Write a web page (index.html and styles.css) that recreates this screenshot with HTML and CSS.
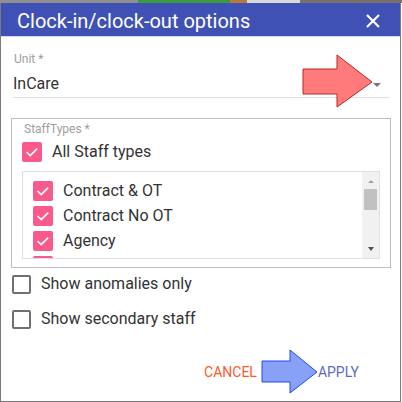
FILE: index.html
```html
<!DOCTYPE html>
<html lang="en">
<head>
  <meta charset="UTF-8">
  <title>Clock-in/clock-out options</title>
  <link rel="stylesheet" href="styles.css">
</head>
<body>
  <!-- page behind the dialog, only a sliver shows -->
  <div class="backdrop-strip">
    <span class="strip-gray"></span>
    <span class="strip-green"></span>
    <span class="strip-brown"></span>
    <span class="strip-light"></span>
    <span class="strip-dark"></span>
  </div>

  <div class="dialog">
    <div class="dialog-header">
      <h2>Clock-in/clock-out options</h2>
      <button class="close-button" aria-label="Close">
        <svg width="14" height="14" viewBox="0 0 14 14">
          <path d="M1 1 L13 13 M13 1 L1 13" stroke="#fff" stroke-width="2.2" fill="none"/>
        </svg>
      </button>
    </div>

    <div class="dialog-body">
      <!-- Unit -->
      <div class="field">
        <div class="field-label">Unit *</div>
        <div class="select-box">
          <span>InCare</span>
          <span class="caret"></span>
        </div>
      </div>

      <!-- Staff types -->
      <div class="staff-types">
        <div class="group-label">StaffTypes *</div>
        <label class="check-row">
          <span class="box checked">
            <svg width="20" height="20" viewBox="0 0 20 20"><path d="M4.5 10 L8.2 13.6 L15.2 6.6" stroke="#fff" stroke-width="1.7" fill="none"/></svg>
          </span>
          All Staff types
        </label>

        <div class="type-list">
          <div class="type-items">
            <label class="check-row">
              <span class="box checked"><svg width="20" height="20" viewBox="0 0 20 20"><path d="M4.5 10 L8.2 13.6 L15.2 6.6" stroke="#fff" stroke-width="1.7" fill="none"/></svg></span>
              Contract &amp; OT
            </label>
            <label class="check-row">
              <span class="box checked"><svg width="20" height="20" viewBox="0 0 20 20"><path d="M4.5 10 L8.2 13.6 L15.2 6.6" stroke="#fff" stroke-width="1.7" fill="none"/></svg></span>
              Contract No OT
            </label>
            <label class="check-row">
              <span class="box checked"><svg width="20" height="20" viewBox="0 0 20 20"><path d="M4.5 10 L8.2 13.6 L15.2 6.6" stroke="#fff" stroke-width="1.7" fill="none"/></svg></span>
              Agency
            </label>
            <!-- next item is scrolled out of view -->
            <div class="check-row">
              <span class="box checked"></span>
            </div>
          </div>
          <div class="scrollbar">
            <span class="arrow-up"></span>
            <span class="thumb"></span>
            <span class="arrow-down"></span>
          </div>
        </div>
      </div>

      <!-- Options -->
      <label class="check-row option">
        <span class="box"></span>
        Show anomalies only
      </label>
      <label class="check-row option second">
        <span class="box"></span>
        Show secondary staff
      </label>

      <div class="actions">
        <button class="btn-cancel">CANCEL</button>
        <button class="btn-apply">APPLY</button>
      </div>
    </div>
  </div>

  <!-- annotation arrows drawn over the screenshot -->
  <svg class="annotations" width="402" height="402" viewBox="0 0 402 402">
    <polygon points="303,69 337,69 337,55 372,82 337,107 337,94 303,94" fill="#ff7a7a" stroke="#b42828" stroke-width="1"/>
    <polygon points="262,361 290,361 290,350 317,372 290,393 290,382 262,382" fill="#86a1f6" stroke="#2448f2" stroke-width="1"/>
  </svg>
</body>
</html>
```

FILE: styles.css
```css
:root {
  --indigo: #3f51b5;
  --pink: #f95a8c;
  --text: #333333;
  --muted: #9e9e9e;
  --line: #e0e0e0;
}

body {
  margin: 0;
  font-family: Roboto, 'Liberation Sans', Arial, sans-serif;
  color: var(--text);
  background: #ffffff;
  position: relative;
  width: 402px;
  height: 402px;
  overflow: hidden;
}

/* Sliver of the page behind */
.backdrop-strip {
  display: flex;
  height: 3px;
}

.strip-gray { width: 138px; background: #8f8f8f; }
.strip-green { width: 92px; background: #3d9b3f; }
.strip-brown { width: 17px; background: #b7773e; }
.strip-light { width: 53px; background: #d9d9d9; }
.strip-dark { flex: 1; background: #77716a; }

/* Dialog */
.dialog {
  width: 401px;
  height: 399px;
  box-sizing: border-box;
  border: 1px solid #7a7a7a;
  border-top: none;
  background: #ffffff;
}

.dialog-header {
  display: flex;
  justify-content: space-between;
  align-items: flex-start;
  height: 34px;
  box-sizing: border-box;
  background: var(--indigo);
  border-bottom: 1px solid #d4d8ef;
  padding: 4px 20px 0 16px;
}

.dialog-header h2 {
  margin: 0;
  font-size: 20px;
  font-weight: 400;
  line-height: 29px;
  color: #ffffff;
}

.close-button {
  background: none;
  border: none;
  padding: 0;
  margin-top: 7px;
  width: 14px;
  height: 14px;
  display: flex;
}

.dialog-body {
  padding: 15px 9px 0 10px;
}

/* Unit field */
.field {
  margin: 0 1px 0 2px;
}

.field-label {
  font-size: 12px;
  line-height: 14px;
  color: var(--muted);
  padding-left: 1px;
}

.select-box {
  display: flex;
  justify-content: space-between;
  align-items: center;
  margin-top: 8px;
  padding-bottom: 3px;
  border-bottom: 1px solid var(--line);
  font-size: 16px;
  line-height: 20px;
}

.caret {
  width: 0;
  height: 0;
  border-left: 4px solid transparent;
  border-right: 4px solid transparent;
  border-top: 4px solid #777777;
  margin: 2px 9px 0 0;
}

/* Staff types group */
.staff-types {
  margin-top: 20px;
  border: 1px solid #bdbdbd;
  padding: 3px 10px 8px 10px;
}

.group-label {
  font-size: 12px;
  line-height: 14px;
  color: var(--muted);
  padding-left: 2px;
}

.check-row {
  display: flex;
  align-items: center;
  gap: 10px;
  height: 20px;
  font-size: 16px;
  line-height: 20px;
  color: var(--text);
}

.staff-types > .check-row {
  margin-top: 6px;
}

.box {
  width: 19px;
  height: 19px;
  box-sizing: border-box;
  border: 2px solid #707070;
  border-radius: 2px;
  flex-shrink: 0;
}

.box.checked {
  width: 20px;
  height: 20px;
  border: none;
  background: var(--pink);
  display: flex;
}

.type-list {
  display: flex;
  margin-top: 9px;
  height: 88px;
  box-sizing: border-box;
  border: 1px solid var(--line);
}

.type-items {
  flex: 1;
  overflow: hidden;
  padding: 9px 0 0 10px;
  display: flex;
  flex-direction: column;
  gap: 5px;
}

.type-items .check-row {
  flex-shrink: 0;
}

/* Fake scrollbar */
.scrollbar {
  width: 17px;
  background: #f1f1f1;
  display: flex;
  flex-direction: column;
  align-items: center;
}

.arrow-up {
  width: 0;
  height: 0;
  margin-top: 8px;
  border-left: 3px solid transparent;
  border-right: 3px solid transparent;
  border-bottom: 3px solid #a3a3a3;
}

.thumb {
  width: 13px;
  height: 21px;
  margin-top: 6px;
  background: #c1c1c1;
}

.arrow-down {
  width: 0;
  height: 0;
  margin-top: auto;
  margin-bottom: 7px;
  border-left: 3.5px solid transparent;
  border-right: 3.5px solid transparent;
  border-top: 4px solid #505050;
}

/* Options */
.option {
  margin-top: 6px;
  padding-left: 1px;
}

.option.second {
  margin-top: 15px;
}

/* Actions */
.actions {
  display: flex;
  justify-content: flex-end;
  gap: 61px;
  margin-top: 33px;
  padding-right: 32px;
}

.actions button {
  background: none;
  border: none;
  padding: 0;
  font-family: inherit;
  font-size: 14px;
  line-height: 20px;
  font-weight: 400;
}

.btn-cancel {
  color: #fa5a2c;
}

.btn-apply {
  color: #5c6bc0;
}

/* Annotation arrows */
.annotations {
  position: absolute;
  top: 0;
  left: 0;
  pointer-events: none;
}
```
